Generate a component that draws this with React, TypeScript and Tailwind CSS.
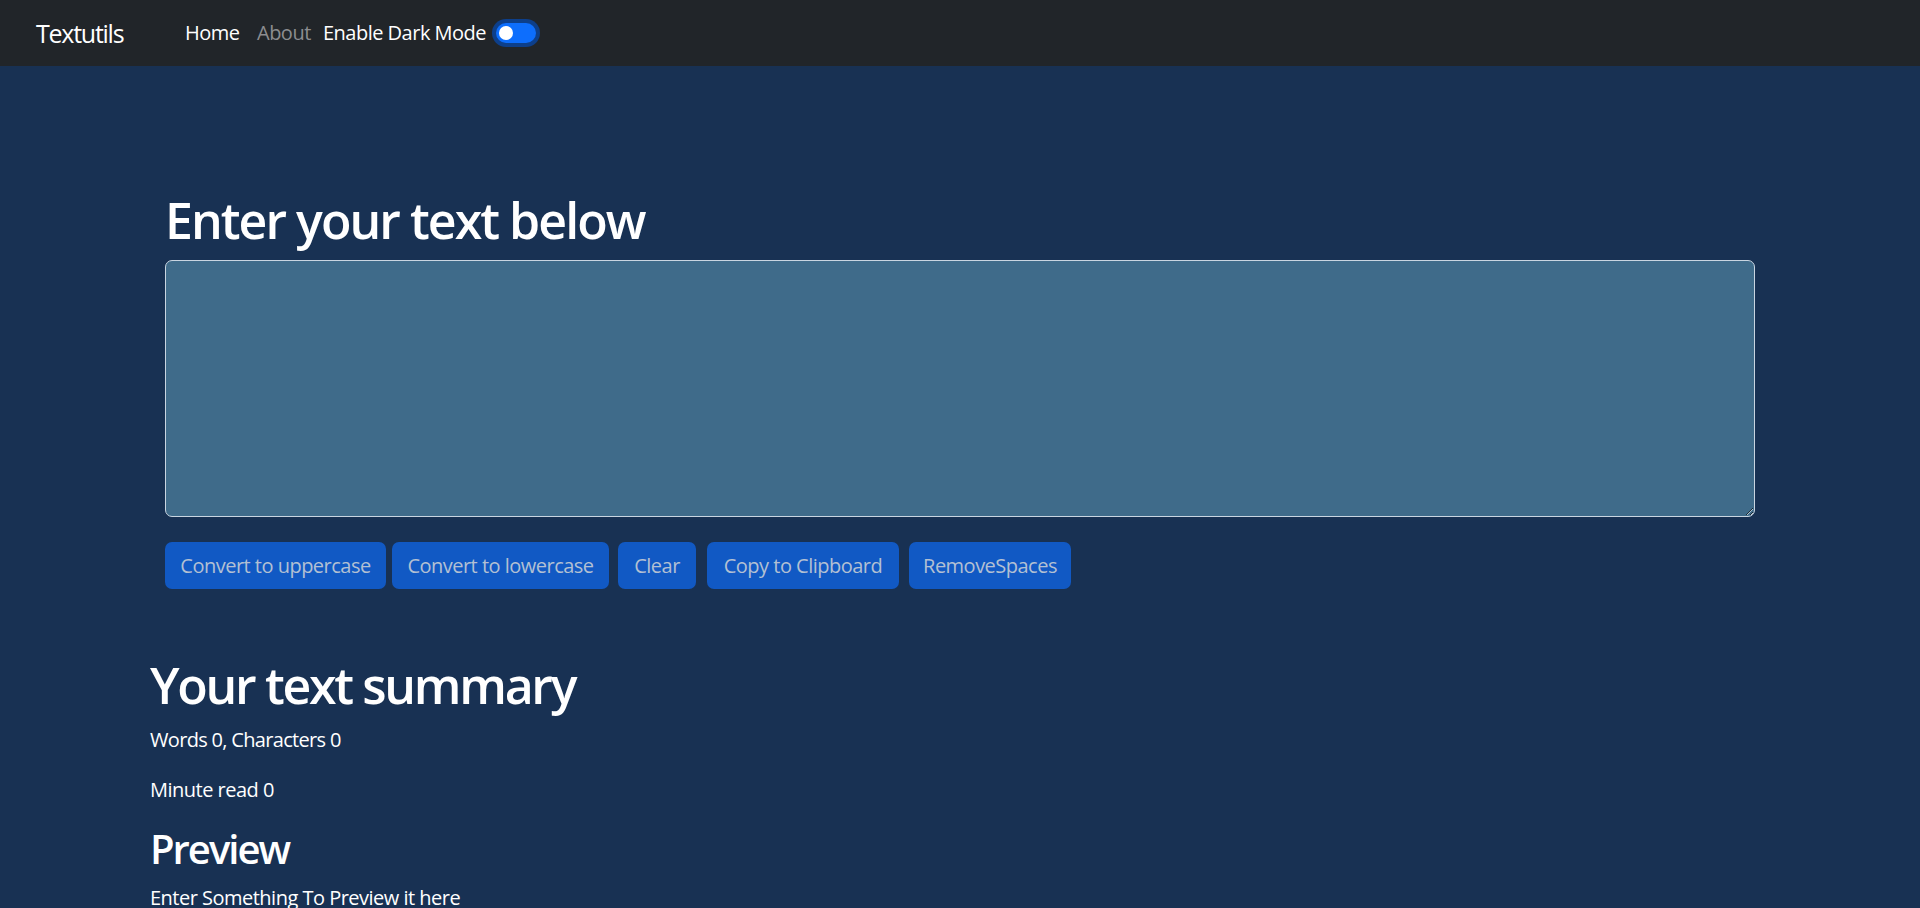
import React from "react";

export default function App() {
  const font = { fontFamily: '"Open Sans", "Noto Sans", sans-serif' };
  return (
    <div className="min-h-[908px] bg-[#183153] text-white tracking-[-0.032em]" style={font}>
      <nav className="h-[66px] bg-[#212529] flex items-center pl-[36px]">
        <div className="w-[149px] text-[25px] leading-none tracking-[-0.05em]">Textutils</div>
        <div className="w-[72px] text-[20px] leading-none text-white">Home</div>
        <div className="w-[66px] text-[20px] leading-none text-[#8c8d90]">About</div>
        <div className="text-[20px] leading-none">Enable Dark Mode</div>
        <div className="ml-[10px] w-[40px] h-[20px] rounded-full bg-[#0d6efd] ring-[4px] ring-[#0d3f8a] flex items-center">
          <div className="ml-[3px] w-[14px] h-[14px] rounded-full bg-white" />
        </div>
      </nav>

      <div className="px-[165px] pt-[124px]">
        <h1 className="text-[50px] leading-[60px] font-semibold mb-[10px] tracking-[-0.039em]">Enter your text below</h1>
        <textarea
          readOnly
          className="block w-full h-[257px] bg-[#3f6b8a] border border-[#c9d5e1] rounded-[7px] outline-none"
        />
        <div className="flex mt-[25px] text-[20px] text-[#b3c0d3]">
          <button className="h-[47px] w-[221px] bg-[#1159c4] rounded-[7px]">Convert to uppercase</button>
          <button className="ml-[6px] h-[47px] w-[217px] bg-[#1159c4] rounded-[7px]">Convert to lowercase</button>
          <button className="ml-[9px] h-[47px] w-[78px] bg-[#1159c4] rounded-[7px]">Clear</button>
          <button className="ml-[11px] h-[47px] w-[192px] bg-[#1159c4] rounded-[7px]">Copy to Clipboard</button>
          <button className="ml-[10px] h-[47px] w-[162px] bg-[#1159c4] rounded-[7px]">RemoveSpaces</button>
        </div>
      </div>

      <div className="px-[150px] pt-[66px]">
        <h1 className="text-[50px] leading-[60px] font-semibold mb-[10px] tracking-[-0.046em]">Your text summary</h1>
        <p className="text-[20px] leading-[30px] mb-[20px] tracking-[-0.034em]">Words 0, Characters 0</p>
        <p className="text-[20px] leading-[30px] mb-[20px]">Minute read 0</p>
        <h2 className="text-[40px] leading-[48px] font-semibold mb-[10px] tracking-[-0.05em]">Preview</h2>
        <p className="text-[20px] leading-[30px]">Enter Something To Preview it here</p>
      </div>
    </div>
  );
}
